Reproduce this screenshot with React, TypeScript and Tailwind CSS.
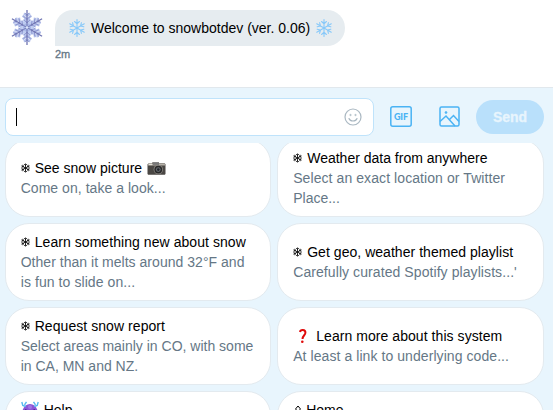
import React from "react";

const SANS = "font-['Helvetica_Neue','Liberation_Sans',Arial,sans-serif]";

function FlakeArm({ angle }: { angle: number }) {
  return (
    <g transform={`rotate(${angle} 18 18)`}>
      <path d="M18 13l-3.4-3.2M18 13l3.4-3.2M18 9.8l-4.4-3.6M18 9.8l4.4-3.6M18 6.4l-3-2.6M18 6.4l3-2.6" stroke="#b4c0ea" strokeWidth="2.3" />
      <path d="M18 13.5l-3-3M18 13.5l3-3M18 9.6l-3.6-2.8M18 9.6l3.6-2.8M18 5.6l-2-2M18 5.6l2-2" stroke="#8089c6" strokeWidth="0.7" />
      <path d="M18 16l-3.2-4.2M18 16l3.2-4.2" stroke="#bccaf0" strokeWidth="1.6" />
      <path d="M18 18V.6" stroke="#6f74b2" strokeWidth="1.3" />
    </g>
  );
}

function Avatar() {
  return (
    <svg width="36" height="37" viewBox="0 0 36 36" fill="none" className="block">
      {[0, 60, 120, 180, 240, 300].map((a) => (
        <FlakeArm key={a} angle={a} />
      ))}
      <circle cx="18" cy="18" r="4" fill="#a9b8e8" />
      <path d="M18 14v8M14.5 16l7 4M21.5 16l-7 4" stroke="#6a6fae" strokeWidth="0.9" />
      <circle cx="18" cy="18" r="1.3" fill="#dbe4fa" />
    </svg>
  );
}

function SnowEmoji() {
  return (
    <svg width="18" height="18" viewBox="0 0 18 18" fill="none" stroke="#88c9f9" strokeWidth="1.1" strokeLinecap="round" className="block shrink-0">
      {[0, 60, 120, 180, 240, 300].map((a) => (
        <path key={a} transform={`rotate(${a} 9 9)`} d="M9 9V.6M9 4.9L6.600 2.500M9 4.900L11.400 2.500" />
      ))}
    </svg>
  );
}

function Flake() {
  return (
    <svg width="9" height="10" viewBox="0 0 9 10" fill="none" stroke="#000" strokeWidth="0.8" className="mr-[5px] block shrink-0">
      {[0, 60, 120, 180, 240, 300].map((a) => (
        <path key={a} transform={`rotate(${a} 4.5 5)`} d="M4.5 5V.5M3.1 1.1l1.4 1.4 1.4-1.4" />
      ))}
    </svg>
  );
}

function Camera() {
  return (
    <svg width="19" height="13" viewBox="0 0 19 13" className="ml-[5px] block shrink-0">
      <path d="M2 1.2h3V.5h7v.7h5.5l1 1v9.8l-.7.7H1.2l-.7-.7V2.2z" fill="#4a4744" />
      <path d="M1.5 1.4h16l1 2.2H.5z" fill="#b5b1a8" />
      <rect x="6" y=".3" width="6" height="2.6" fill="#777" />
      <rect x="2" y="1.7" width="3" height="1.4" fill="#e5e2da" />
      <circle cx="11.3" cy="7.6" r="4.7" fill="#8c8984" />
      <circle cx="11.3" cy="7.6" r="3.9" fill="#292929" />
      <circle cx="11.3" cy="7.6" r="2.4" fill="#666b70" />
      <circle cx="11.3" cy="7.6" r="1.3" fill="#202329" />
    </svg>
  );
}

function Question() {
  return (
    <svg width="8" height="15" viewBox="0 0 8 15" fill="none" className="ml-[6px] mr-[9px] block shrink-0">
      <path d="M1 3C1.4.4 6.5.3 6.4 3.7 6.3 6.2 3.8 6.4 3.5 10" stroke="#e00b0b" strokeWidth="2" />
      <circle cx="3.3" cy="12.8" r="1.3" fill="#e00b0b" />
    </svg>
  );
}

function Monster() {
  return (
    <svg width="18" height="18" viewBox="0 0 18 18" className="mr-[5px] block shrink-0">
      <path d="M1 17C0 8 4 3 9 3s9 5 8 14z" fill="#8a55d6" />
      <path d="M.8 1l1 3.500 3 1M3.500 3.800L5.500.8M17.200 1l-1 3.500-3 1M14.500 3.800L12.500.8" fill="none" stroke="#55b9ee" strokeWidth="1.4" />
      <path d="M4 8.500l4 2M14 8.500l-4 2" stroke="#4b2491" strokeWidth="1.3" />
      <circle cx="9" cy="6" r="2" fill="#a374e4" />
    </svg>
  );
}

function HomeGlyph() {
  return (
    <svg width="8" height="12" viewBox="0 0 8 12" fill="none" stroke="#000" className="ml-px mr-[4px] block shrink-0">
      <path d="M1.500 5L4 2l2.500 3M2 5v5h4V5" />
    </svg>
  );
}

type Option = {
  icon: React.ReactNode;
  title: string;
  titleClass: string;
  after?: React.ReactNode;
  lines: { text: string; cls: string }[];
};

const options: Option[] = [
  { icon: <Flake />, title: "See snow picture", titleClass: "", after: <Camera />, lines: [{ text: "Come on, take a look...", cls: "tracking-[0.04px]" }] },
  { icon: <Flake />, title: "Weather data from anywhere", titleClass: "", lines: [{ text: "Select an exact location or Twitter", cls: "tracking-[0.08px]" }, { text: "Place...", cls: "" }] },
  { icon: <Flake />, title: "Learn something new about snow", titleClass: "tracking-[0.06px]", lines: [{ text: "Other than it melts around 32°F and", cls: "tracking-[0.03px]" }, { text: "is fun to slide on...", cls: "tracking-[0.08px]" }] },
  { icon: <Flake />, title: "Get geo, weather themed playlist", titleClass: "tracking-[0.04px]", lines: [{ text: "Carefully curated Spotify playlists...'", cls: "tracking-[0.08px]" }] },
  { icon: <Flake />, title: "Request snow report", titleClass: "tracking-[0.06px]", lines: [{ text: "Select areas mainly in CO, with some", cls: "" }, { text: "in CA, MN and NZ.", cls: "" }] },
  { icon: <Question />, title: "Learn more about this system", titleClass: "tracking-[0.06px]", lines: [{ text: "At least a link to underlying code...", cls: "tracking-[0.07px]" }] },
  { icon: <Monster />, title: "Help", titleClass: "", lines: [{ text: "", cls: "" }, { text: "", cls: "" }] },
  { icon: <HomeGlyph />, title: "Home", titleClass: "", lines: [{ text: "", cls: "" }, { text: "", cls: "" }] },
];

function OptionCard({ option }: { option: Option }) {
  return (
    <button className="flex h-[78px] flex-col items-start justify-center rounded-[24px] border border-[#e3eaef] bg-white px-[15px] text-left text-[14px] leading-5 whitespace-nowrap">
      <span className="flex h-5 items-center text-black">
        {option.icon}
        <span className={option.titleClass}>{option.title}</span>
        {option.after}
      </span>
      {option.lines.map((line, i) => (
        <span key={i} className={`block h-5 text-[#657786] ${line.cls}`}>
          {line.text}
        </span>
      ))}
    </button>
  );
}

export default function App() {
  return (
    <div className={`flex h-[410px] w-[553px] flex-col overflow-hidden bg-white ${SANS}`}>
      <section className="flex h-[87px] shrink-0 items-start pl-[9px] pt-[9px]">
        <Avatar />
        <div className="ml-[10px] pt-px">
          <div className="flex h-9 w-[290px] items-center rounded-[18px] rounded-bl-none bg-[#e6ecf0] pl-[13px] text-[14px] text-black whitespace-nowrap">
            <SnowEmoji />
            <span className="w-[229px] pl-[5px]">Welcome to snowbotdev (ver. 0.06)</span>
            <SnowEmoji />
          </div>
          <div className="text-[11px] leading-4 text-[#657786] [-webkit-text-stroke:0.3px_#657786]">2m</div>
        </div>
      </section>

      <section className="flex h-[56px] shrink-0 items-start border-t border-[#e1e8ed] bg-[#e8f5fd] pl-[5px] pt-[10px]">
        <div className="flex h-[38px] w-[369px] items-center justify-between rounded-lg border border-[#bfe3fb] bg-white pl-[10px] pr-[11px]">
          <span className="h-[18px] w-px bg-black" />
          <svg width="18" height="18" viewBox="0 0 18 18" fill="none" stroke="#aab8c2" strokeWidth="1.2" className="block">
            <circle cx="9" cy="9" r="8" />
            <path d="M5 10.500c1.200 3.300 6.800 3.300 8 0" strokeLinecap="round" />
            <circle cx="6.500" cy="7" r=".8" fill="#aab8c2" strokeWidth=".4" />
            <circle cx="11.500" cy="7" r=".8" fill="#aab8c2" strokeWidth=".4" />
          </svg>
        </div>
        <svg width="22" height="21" viewBox="0 0 22 21" className="ml-[16px] mt-[8px] block font-['Lato',sans-serif] text-[9px] font-black">
          <rect x=".8" y=".8" width="20.4" height="19.400" rx="2" fill="none" stroke="#4ab3f4" strokeWidth="1.500" />
          <text x="11" y="13.600" textAnchor="middle" textLength="14" fill="#4ab3f4">GIF</text>
        </svg>
        <svg width="21" height="21" viewBox="0 0 21 21" fill="none" stroke="#4ab3f4" strokeWidth="1.500" className="ml-[27px] mt-[8px] block">
          <rect x="1" y="1" width="19" height="19" rx="1.500" />
          <path d="M1 15.500l6-5.500 9 10M10.500 13.500l4-4 5.500 6" />
          <circle cx="7" cy="6.500" r="1" fill="#4ab3f4" strokeWidth=".7" />
        </svg>
        <button className="ml-[16px] mt-[2px] h-[34px] w-[68px] rounded-full bg-[#b9e0fb] text-[14px] font-bold text-[#e8f5fd] [-webkit-text-stroke:0.3px_#e8f5fd]">Send</button>
      </section>

      <section className="min-h-0 flex-1 overflow-hidden bg-[#e8f5fd] pl-[4.7px]">
        <div className="-mt-[4px] grid w-[540px] grid-cols-[266.500px_266.500px] gap-1.5">
          {options.map((option) => (
            <OptionCard key={option.title} option={option} />
          ))}
        </div>
      </section>
    </div>
  );
}
